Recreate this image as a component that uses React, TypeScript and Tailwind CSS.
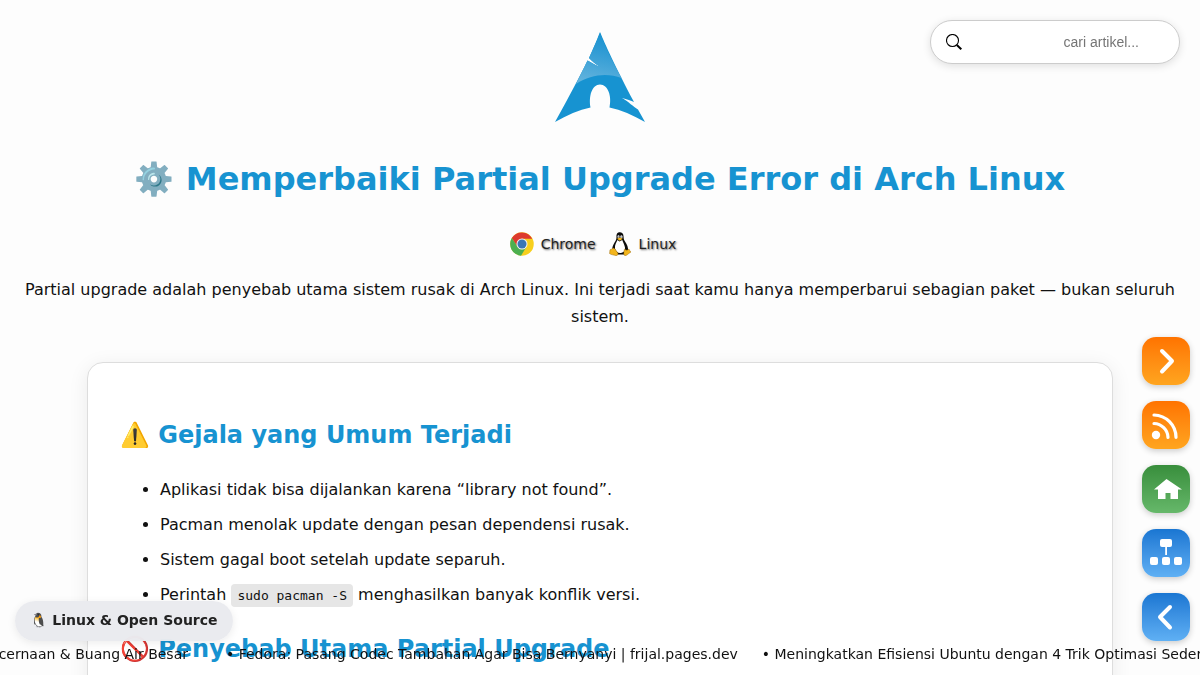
import type { ReactNode } from "react";

const symptoms: ReactNode[] = [
  "Aplikasi tidak bisa dijalankan karena “library not found”.",
  "Pacman menolak update dengan pesan dependensi rusak.",
  "Sistem gagal boot setelah update separuh.",
  <>
    Perintah{" "}
    <code className="rounded bg-[#e6e6e6] px-1.5 py-1 font-['DejaVu_Sans_Mono',monospace] text-[13px]">
      sudo pacman -S
    </code>{" "}
    menghasilkan banyak konflik versi.
  </>,
];

const news = [
  "Fedora: Pasang Codec Tambahan Agar Bisa Bernyanyi | frijal.pages.dev",
  "Meningkatkan Efisiensi Ubuntu dengan 4 Trik Optimasi Sederhana",
];

function ArchLogo() {
  return (
    <svg viewBox="0 0 90 90" className="size-[90px]" role="img" aria-label="Arch Linux">
      <defs>
        <linearGradient id="arch-shine" x1="0.6" y1="0" x2="0.4" y2="1">
          <stop offset="0" stopColor="#1793d1" />
          <stop offset="0.35" stopColor="#2f9bd4" />
          <stop offset="1" stopColor="#62b3dd" />
        </linearGradient>
      </defs>
      <path
        fill="#1793d1"
        d="M45 0C41 10 38.500 16 34 26C37 29 40 32 45.500 35C40 33 36 30.500 32.500 28.500C26 42 15 63 0 90C12 83 24 78 35.500 75.500C33.500 64 37 52.500 45 52.500C53 52.500 57 64 54.500 75.500C66 78 78 83 90 90L83 77.500C78 74.500 74 70 67 66C72 67 76 69 79 70C60 34 50 12 45 0Z"
      />
      <path
        fill="url(#arch-shine)"
        d="M45 1C41 11 38.500 16 34 26C37 29 40 32 45.500 35C40 33 36 30.500 32.500 28.500L21 52C36 42 53 41 66.500 46C56 27 49 12 45 1Z"
      />
    </svg>
  );
}

function ChromeIcon() {
  return (
    <svg viewBox="0 0 48 48" className="size-6" aria-hidden="true">
      <circle cx="24" cy="24" r="23.500" fill="#f7cf1d" />
      <path fill="#dd3a2e" d="M3.600 12A23.500 23.500 0 0 1 44.500 13.500H24A10.500 10.500 0 0 0 14 21Z" />
      <path fill="#dd3a2e" d="M3.600 12L15 29.500L24 13.500Z" />
      <path fill="#4caf50" d="M3.600 12A23.500 23.500 0 0 0 22 47.400L33 29.500A10.500 10.500 0 0 1 14.900 29.200Z" />
      <circle cx="24" cy="24" r="11" fill="#f4f4f4" />
      <circle cx="24" cy="24" r="9" fill="#3a76b4" />
    </svg>
  );
}

function TuxIcon() {
  return (
    <svg viewBox="0 0 48 48" className="size-6" aria-hidden="true">
      <path
        fill="#0b0b0b"
        d="M23.500 0.500C18 0.500 16.500 5 17 10C17.400 16 14 19 11.500 24C9.500 28 8 32 8.500 37L16 45H32L40 38C41 31 38 25 34 19C31 15 31.500 12 31 8C30.500 3 28 0.500 23.500 0.500Z"
      />
      <path fill="#fff" d="M19 16C17 20 13 26 14 33C15 39 20 43 26 42C32 41 35 37 34 31C33 26 30 20 28.500 16L23 19Z" />
      <ellipse cx="21" cy="9.500" rx="2" ry="2.800" fill="#fff" />
      <ellipse cx="26.800" cy="9.500" rx="2.300" ry="3" fill="#fff" />
      <circle cx="21.500" cy="10" r="1" />
      <circle cx="26.200" cy="10" r="1.100" />
      <path fill="#f5b81c" d="M18 13.500L23.500 11L29.500 13.500L23.500 17.500Z" />
      <path
        fill="#f2b51d"
        stroke="#8a5a00"
        strokeWidth="0.800"
        d="M10 32C8 34 6 35 4 35.500C3 38 4 40 3 43C6 46 12 45.500 16 47.500C20 47 21 44 19 41C16 37 14 32 10 32Z"
      />
      <path
        fill="#f2b51d"
        stroke="#8a5a00"
        strokeWidth="0.800"
        d="M33 34C32 38 31 43 32 46C35 49 38 46 41 43.500L46 40C44 38 43 37 42 34C39 37 36 37 33 34Z"
      />
    </svg>
  );
}

function SearchIcon() {
  return (
    <svg viewBox="0 0 16 16" className="size-4" fill="none" stroke="#000" aria-hidden="true">
      <circle cx="6.500" cy="6.500" r="6" strokeWidth="1.100" />
      <path d="M10.800 11L15.300 15.300" strokeWidth="2" />
    </svg>
  );
}

const chevronRight = (
  <path d="M20 14L30 24L20 34.500" fill="none" stroke="#fff" strokeWidth="4" strokeLinecap="round" strokeLinejoin="round" />
);
const chevronLeft = (
  <path d="M28 14L18 24L28 34.500" fill="none" stroke="#fff" strokeWidth="4" strokeLinecap="round" strokeLinejoin="round" />
);
const feed = (
  <g fill="none" stroke="#fff" strokeWidth="3.200" strokeLinecap="round">
    <circle cx="14" cy="34" r="4.200" fill="#fff" stroke="none" />
    <path d="M12 22.500A14.500 14.500 0 0 1 26 36.300" />
    <path d="M12 14A22.500 22.500 0 0 1 34 36.300" />
  </g>
);
const home = (
  <path fill="#fff" d="M24.500 14L40 24.500H36V34H28.500V28H23.500V34H16V24.500H12Z" />
);
const sitemap = (
  <g fill="#fff">
    <rect x="18" y="10" width="12" height="8" rx="2" />
    <rect x="23.200" y="17" width="1.800" height="9" />
    <rect x="8" y="28" width="8" height="8" rx="2" />
    <rect x="20" y="28" width="8" height="8" rx="2" />
    <rect x="32" y="28" width="8" height="8" rx="2" />
  </g>
);

const links = [
  { label: "Artikel berikutnya", href: "#next", icon: chevronRight, tone: "from-[#ff7300] to-[#ffa51f]" },
  { label: "RSS", href: "#rss", icon: feed, tone: "from-[#ff7300] to-[#ffa51f]" },
  { label: "Beranda", href: "#home", icon: home, tone: "from-[#388e3c] to-[#66b86a]" },
  { label: "Peta situs", href: "#sitemap", icon: sitemap, tone: "from-[#1976d2] to-[#5fb0f4]" },
  { label: "Artikel sebelumnya", href: "#prev", icon: chevronLeft, tone: "from-[#1976d2] to-[#5fb0f4]" },
];

export default function App() {
  return (
    <div className="min-h-screen overflow-x-hidden bg-[#fdfdfd] font-['DejaVu_Sans','Noto_Color_Emoji',sans-serif] text-base leading-[27px] text-[#111]">
      <header className="flex flex-col items-center px-5 pt-8 text-center">
        <ArchLogo />
        <h1 className="mt-[30px] text-[32px] leading-[54px] font-bold text-[#1793d1]">
          ⚙️ Memperbaiki Partial Upgrade Error di Arch Linux
        </h1>
        <div className="mt-[26px] flex items-center gap-3 pr-3.5 text-sm leading-6 text-[#222] text-shadow-[1px_1px_2px_rgb(0_0_0/0.6)]">
          <span className="flex items-center gap-[7px]">
            <ChromeIcon />
            Chrome
          </span>
          <span className="flex items-center gap-[7px]">
            <TuxIcon />
            Linux
          </span>
        </div>
        <p className="mt-5">
          Partial upgrade adalah penyebab utama sistem rusak di Arch Linux. Ini terjadi saat kamu hanya memperbarui
          sebagian paket — bukan seluruh sistem.
        </p>
      </header>

      <main className="px-[30px] pt-8">
        <article className="mx-auto w-[90%] rounded-2xl border border-[#ddd] bg-white px-8 pt-[52px] pb-8 shadow-[0_4px_20px_rgb(0_0_0/0.08)]">
          <h2 className="text-2xl leading-10 font-bold text-[#1793d1]">⚠️ Gejala yang Umum Terjadi</h2>
          <ul className="mt-[21px] flex list-disc flex-col gap-2 pl-10">
            {symptoms.map((item, i) => (
              <li key={i}>{item}</li>
            ))}
          </ul>
          <h2 className="mt-5 text-2xl leading-10 font-bold text-[#1793d1]">🚫 Penyebab Utama Partial Upgrade</h2>
        </article>
      </main>

      <form
        role="search"
        className="fixed top-5 right-5 flex h-11 w-[250px] items-center rounded-full border border-[#ccc] bg-white px-[15px] shadow-[0_2px_8px_rgb(0_0_0/0.12)]"
      >
        <label htmlFor="search" aria-label="Cari artikel">
          <SearchIcon />
        </label>
        <input
          id="search"
          type="text"
          placeholder="cari artikel..."
          className="min-w-0 flex-1 bg-transparent pr-[25px] text-right font-['Liberation_Sans',sans-serif] text-sm outline-none placeholder:text-[#757575]"
        />
      </form>

      <nav className="fixed right-2.5 bottom-[34px] flex flex-col gap-4">
        {links.map((link) => (
          <a
            key={link.href}
            href={link.href}
            aria-label={link.label}
            className={`block size-12 rounded-[14px] bg-linear-to-b shadow-[0_2px_6px_rgb(0_0_0/0.2)] ${link.tone}`}
          >
            <svg viewBox="0 0 48 48" className="size-12" aria-hidden="true">
              {link.icon}
            </svg>
          </a>
        ))}
      </nav>

      <a
        href="#linux"
        className="fixed bottom-[34px] left-[15px] flex h-10 items-center rounded-full bg-[#e9eaee]/95 px-[15px] pb-0.5 text-sm font-bold text-[#222] shadow-[0_2px_8px_rgb(0_0_0/0.08)] backdrop-blur-sm"
      >
        🐧 Linux &amp; Open Source
      </a>

      <footer className="fixed inset-x-0 bottom-0 flex h-[42px] items-center gap-6 overflow-hidden text-sm whitespace-nowrap">
        <span className="flex w-[202px] shrink-0 justify-end pr-3.5">
          • Menjaga Kesehatan Pencernaan &amp; Buang Air Besar
        </span>
        {news.map((title) => (
          <span key={title} className="shrink-0">
            • {title}
          </span>
        ))}
      </footer>
    </div>
  );
}
